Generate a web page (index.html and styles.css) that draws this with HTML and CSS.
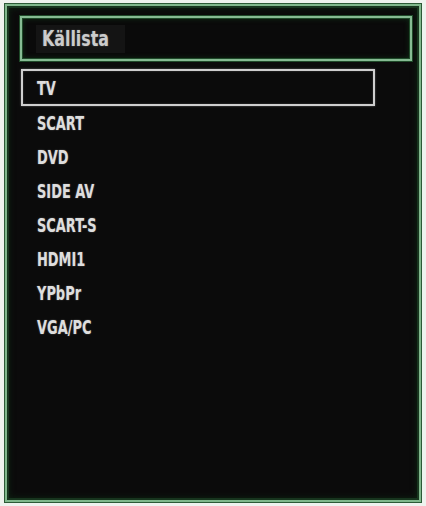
FILE: index.html
```html
<!DOCTYPE html>
<html lang="sv">
<head>
<meta charset="utf-8">
<title>Källista</title>
<link rel="stylesheet" href="styles.css">
</head>
<body>
<div class="frame">
  <div class="title-box">
    <span class="title-label"><span class="title-text">Källista</span></span>
  </div>
  <ul class="source-list">
    <li class="source selected"><span class="label">TV</span></li>
    <li class="source"><span class="label">SCART</span></li>
    <li class="source"><span class="label">DVD</span></li>
    <li class="source"><span class="label">SIDE AV</span></li>
    <li class="source"><span class="label">SCART-S</span></li>
    <li class="source"><span class="label">HDMI1</span></li>
    <li class="source"><span class="label">YPbPr</span></li>
    <li class="source"><span class="label">VGA/PC</span></li>
  </ul>
</div>
</body>
</html>
```
FILE: styles.css
```css
html, body {
  margin: 0;
  padding: 0;
}
body {
  background: #eef3ee;
  width: 426px;
  height: 506px;
  overflow: hidden;
  font-family: "DejaVu Sans Condensed", "DejaVu Sans", sans-serif;
  font-stretch: condensed;
}
.frame {
  box-sizing: border-box;
  margin: 4px 0 0 5px;
  width: 416px;
  height: 498px;
  background: #0b0b0b;
  border: 2px solid #80b88c;
  box-shadow: 0 0 0 1px #2c5a36, inset 0 0 0 2px #17351e, inset 0 0 6px 2px #0d2212;
  padding: 10px 0 0 13px;
}
.title-box {
  box-sizing: border-box;
  width: 392px;
  height: 45px;
  border: 2px solid #86bb93;
  box-shadow: 0 0 0 1px #1f4a29, inset 0 0 0 1px #1f4a29, inset 0 0 5px 1px #0f2a15;
  background: #0a0a0a;
  display: flex;
  align-items: center;
  padding-left: 14px;
}
.title-label {
  display: inline-flex;
  align-items: center;
  width: 89px;
  height: 28px;
  padding-left: 6px;
  box-sizing: border-box;
  background: #141414;
}
.title-text {
  display: inline-block;
  font-size: 22px;
  line-height: 28px;
  font-weight: bold;
  color: #cbcbcb;
  transform: scaleX(0.8);
  transform-origin: left center;
  text-shadow: 0 0 2px rgba(255,255,255,0.3);
  white-space: nowrap;
}
.source-list {
  list-style: none;
  margin: 8px 0 0 1px;
  padding: 0;
  width: 354px;
  display: flex;
  flex-direction: column;
}
.source {
  box-sizing: border-box;
  height: 34px;
  display: flex;
  align-items: center;
  padding-left: 16px;
}
.source.selected {
  height: 37px;
  border: 2px solid #cfcfcf;
  box-shadow: 0 0 2px rgba(255,255,255,0.35), inset 0 0 2px rgba(255,255,255,0.25);
  padding-left: 14px;
}
.label {
  display: inline-block;
  font-size: 20px;
  line-height: 20px;
  font-weight: bold;
  color: #dedede;
  transform: scaleX(0.72);
  transform-origin: left center;
  text-shadow: 0 0 2px rgba(255,255,255,0.35);
  white-space: nowrap;
}
```
